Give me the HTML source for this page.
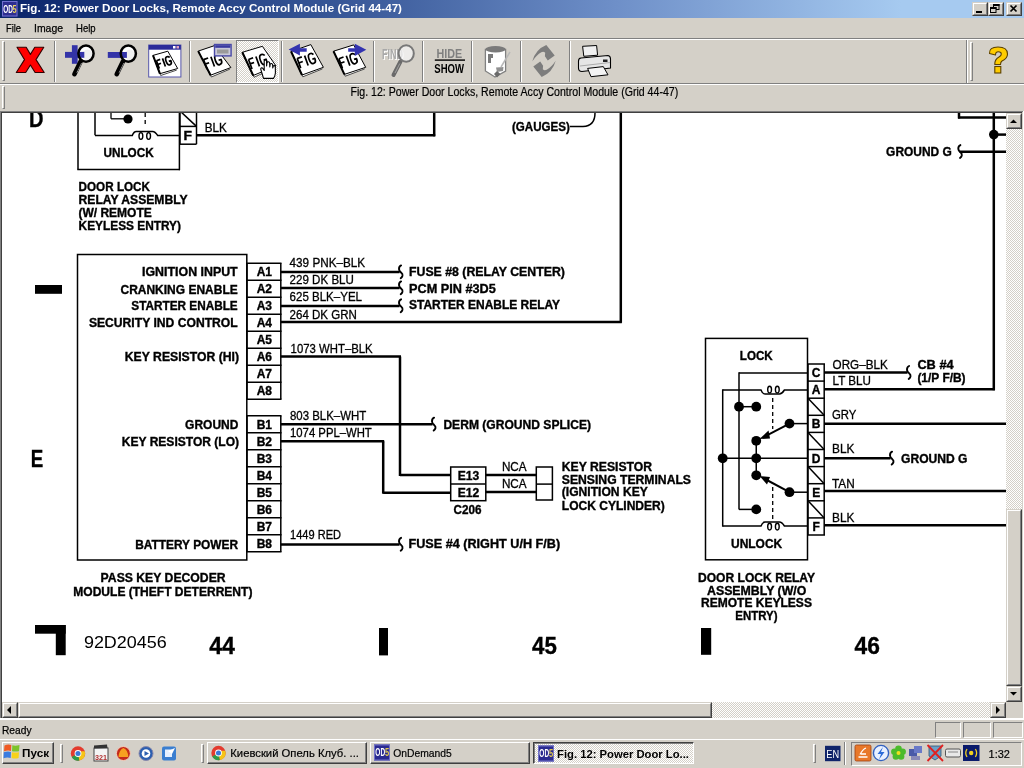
<!DOCTYPE html>
<html><head><meta charset="utf-8"><style>
html,body{margin:0;padding:0;width:1024px;height:768px;overflow:hidden;background:#d4d0c8;}
body{position:relative;font-family:"Liberation Sans", sans-serif;}
.a{position:absolute;box-sizing:border-box;}
svg text{font-family:"Liberation Sans", sans-serif;}
svg{will-change:transform;}
.dg text{stroke:#000;stroke-width:0.3px;}
.dg text[font-weight=bold]{stroke-width:0.35px;}
</style></head><body>
<div class="a" style="left:0px;top:0px;width:1024px;height:18px;background:linear-gradient(90deg,#0a246a 0%,#3a5a9a 35%,#6e8fc8 60%,#a6caf0 88%,#a6caf0 100%);"></div><svg class="a" style="left:0;top:0" width="1024" height="40"><rect x="2" y="1" width="15.5" height="15.5" fill="#2e2e90"/><rect x="2.5" y="1.5" width="14.5" height="14.5" fill="none" stroke="#7070d0" stroke-width="1"/><text x="3.2" y="12.6" font-size="11" font-weight="bold" fill="#fff" textLength="9.6" lengthAdjust="spacingAndGlyphs">OD</text><text x="12.6" y="12.6" font-size="11" font-weight="bold" fill="#e8d060" textLength="4" lengthAdjust="spacingAndGlyphs">5</text><text x="20.0" y="12.4" font-size="11.5" font-weight="bold" fill="#fff" textLength="382.0" lengthAdjust="spacingAndGlyphs">Fig. 12: Power Door Locks, Remote Accy Control Module (Grid 44-47)</text><text x="6.0" y="31.6" font-size="11.5" font-weight="normal" fill="#000" textLength="15.0" lengthAdjust="spacingAndGlyphs" stroke="#000" stroke-width="0.25">File</text><text x="34.0" y="31.6" font-size="11.5" font-weight="normal" fill="#000" textLength="29.0" lengthAdjust="spacingAndGlyphs" stroke="#000" stroke-width="0.25">Image</text><text x="76.0" y="31.6" font-size="11.5" font-weight="normal" fill="#000" textLength="19.6" lengthAdjust="spacingAndGlyphs" stroke="#000" stroke-width="0.25">Help</text></svg><div class="a" style="left:972px;top:2px;width:16px;height:14px;background:#d4d0c8;border-top:1px solid #d4d0c8;border-left:1px solid #d4d0c8;border-right:1px solid #404040;border-bottom:1px solid #404040;"></div><div class="a" style="left:973px;top:3px;width:14px;height:12px;border-top:1px solid #fff;border-left:1px solid #fff;border-right:1px solid #808080;border-bottom:1px solid #808080;"></div><div class="a" style="left:988px;top:2px;width:16px;height:14px;background:#d4d0c8;border-top:1px solid #d4d0c8;border-left:1px solid #d4d0c8;border-right:1px solid #404040;border-bottom:1px solid #404040;"></div><div class="a" style="left:989px;top:3px;width:14px;height:12px;border-top:1px solid #fff;border-left:1px solid #fff;border-right:1px solid #808080;border-bottom:1px solid #808080;"></div><div class="a" style="left:1006px;top:2px;width:16px;height:14px;background:#d4d0c8;border-top:1px solid #d4d0c8;border-left:1px solid #d4d0c8;border-right:1px solid #404040;border-bottom:1px solid #404040;"></div><div class="a" style="left:1007px;top:3px;width:14px;height:12px;border-top:1px solid #fff;border-left:1px solid #fff;border-right:1px solid #808080;border-bottom:1px solid #808080;"></div><svg class="a" style="left:0;top:0" width="1024" height="20"><rect x="976" y="11" width="6" height="2" fill="#000"/><rect x="993.5" y="4.5" width="5.5" height="5" fill="none" stroke="#000" stroke-width="1"/><rect x="993" y="4" width="6.5" height="2" fill="#000"/><rect x="990.5" y="7.5" width="5.5" height="5" fill="#d4d0c8" stroke="#000" stroke-width="1"/><rect x="990" y="7" width="6.5" height="2" fill="#000"/><path d="M1010.5,5.5 L1016.5,11.5 M1016.5,5.5 L1010.5,11.5" stroke="#000" stroke-width="1.7"/></svg><div class="a" style="left:0px;top:38px;width:1024px;height:1px;background:#808080;"></div><div class="a" style="left:0px;top:39px;width:1024px;height:1px;background:#fff;"></div><div class="a" style="left:0px;top:83px;width:1024px;height:1px;background:#808080;"></div><div class="a" style="left:0px;top:84px;width:1024px;height:1px;background:#fff;"></div><div class="a" style="left:2px;top:41px;width:3px;height:40px;border-top:1px solid #fff;border-left:1px solid #fff;border-right:1px solid #808080;border-bottom:1px solid #808080;"></div><div class="a" style="left:966px;top:40px;width:1px;height:43px;background:#808080;"></div><div class="a" style="left:967px;top:40px;width:1px;height:43px;background:#fff;"></div><div class="a" style="left:970px;top:42px;width:3px;height:39px;border-top:1px solid #fff;border-left:1px solid #fff;border-right:1px solid #808080;border-bottom:1px solid #808080;"></div><div class="a" style="left:54px;top:41px;width:2px;height:41px;border-left:1px solid #808080;border-right:1px solid #fff;"></div><div class="a" style="left:189px;top:41px;width:2px;height:41px;border-left:1px solid #808080;border-right:1px solid #fff;"></div><div class="a" style="left:281px;top:41px;width:2px;height:41px;border-left:1px solid #808080;border-right:1px solid #fff;"></div><div class="a" style="left:373px;top:41px;width:2px;height:41px;border-left:1px solid #808080;border-right:1px solid #fff;"></div><div class="a" style="left:422px;top:41px;width:2px;height:41px;border-left:1px solid #808080;border-right:1px solid #fff;"></div><div class="a" style="left:471px;top:41px;width:2px;height:41px;border-left:1px solid #808080;border-right:1px solid #fff;"></div><div class="a" style="left:520px;top:41px;width:2px;height:41px;border-left:1px solid #808080;border-right:1px solid #fff;"></div><div class="a" style="left:569px;top:41px;width:2px;height:41px;border-left:1px solid #808080;border-right:1px solid #fff;"></div><div class="a" style="left:236px;top:40px;width:43px;height:43px;border-top:1px solid #808080;border-left:1px solid #808080;border-right:1px solid #fff;border-bottom:1px solid #fff;background:repeating-conic-gradient(#d4d0c8 0% 25%, #fff 0% 50%) 0 0/2px 2px;"></div><div class="a" style="left:2px;top:86px;width:3px;height:23px;border-top:1px solid #fff;border-left:1px solid #fff;border-right:1px solid #808080;border-bottom:1px solid #808080;"></div><div class="a" style="left:0px;top:110px;width:1024px;height:1px;background:#d4d0c8;"></div><svg class="a" style="left:0;top:84" width="1024" height="30"><text x="350.5" y="12.0" font-size="12" font-weight="normal" fill="#000" textLength="327.7" lengthAdjust="spacingAndGlyphs" stroke="#000" stroke-width="0.2">Fig. 12: Power Door Locks, Remote Accy Control Module (Grid 44-47)</text></svg><div class="a" style="left:0px;top:111px;width:1024px;height:1px;background:#808080;"></div><div class="a" style="left:1px;top:112px;width:1022px;height:1px;background:#404040;"></div><div class="a" style="left:0px;top:111px;width:1px;height:608px;background:#808080;"></div><div class="a" style="left:1px;top:112px;width:1px;height:606px;background:#404040;"></div><div class="a" style="left:2px;top:113px;width:1004px;height:589px;background:#fff;"></div><div class="a" style="left:1022px;top:112px;width:1px;height:606px;background:#d4d0c8;"></div><div class="a" style="left:1023px;top:111px;width:1px;height:608px;background:#fff;"></div><div class="a" style="left:1px;top:718px;width:1022px;height:1px;background:#d4d0c8;"></div><div class="a" style="left:0px;top:718px;width:1024px;height:1px;background:#fff;"></div><div class="a" style="left:1006px;top:113px;width:16px;height:589px;background:repeating-conic-gradient(#d4d0c8 0% 25%, #fff 0% 50%) 0 0/2px 2px;"></div><div class="a" style="left:1006px;top:113px;width:16px;height:16px;background:#d4d0c8;border-top:1px solid #d4d0c8;border-left:1px solid #d4d0c8;border-right:1px solid #404040;border-bottom:1px solid #404040;"></div><div class="a" style="left:1007px;top:114px;width:14px;height:14px;border-top:1px solid #fff;border-left:1px solid #fff;border-right:1px solid #808080;border-bottom:1px solid #808080;"></div><div class="a" style="left:1006px;top:509px;width:16px;height:177px;background:#d4d0c8;border-top:1px solid #d4d0c8;border-left:1px solid #d4d0c8;border-right:1px solid #404040;border-bottom:1px solid #404040;"></div><div class="a" style="left:1007px;top:510px;width:14px;height:175px;border-top:1px solid #fff;border-left:1px solid #fff;border-right:1px solid #808080;border-bottom:1px solid #808080;"></div><div class="a" style="left:1006px;top:686px;width:16px;height:16px;background:#d4d0c8;border-top:1px solid #d4d0c8;border-left:1px solid #d4d0c8;border-right:1px solid #404040;border-bottom:1px solid #404040;"></div><div class="a" style="left:1007px;top:687px;width:14px;height:14px;border-top:1px solid #fff;border-left:1px solid #fff;border-right:1px solid #808080;border-bottom:1px solid #808080;"></div><div class="a" style="left:2px;top:702px;width:1004px;height:16px;background:repeating-conic-gradient(#d4d0c8 0% 25%, #fff 0% 50%) 0 0/2px 2px;"></div><div class="a" style="left:2px;top:702px;width:16px;height:16px;background:#d4d0c8;border-top:1px solid #d4d0c8;border-left:1px solid #d4d0c8;border-right:1px solid #404040;border-bottom:1px solid #404040;"></div><div class="a" style="left:3px;top:703px;width:14px;height:14px;border-top:1px solid #fff;border-left:1px solid #fff;border-right:1px solid #808080;border-bottom:1px solid #808080;"></div><div class="a" style="left:18px;top:702px;width:694px;height:16px;background:#d4d0c8;border-top:1px solid #d4d0c8;border-left:1px solid #d4d0c8;border-right:1px solid #404040;border-bottom:1px solid #404040;"></div><div class="a" style="left:19px;top:703px;width:692px;height:14px;border-top:1px solid #fff;border-left:1px solid #fff;border-right:1px solid #808080;border-bottom:1px solid #808080;"></div><div class="a" style="left:990px;top:702px;width:16px;height:16px;background:#d4d0c8;border-top:1px solid #d4d0c8;border-left:1px solid #d4d0c8;border-right:1px solid #404040;border-bottom:1px solid #404040;"></div><div class="a" style="left:991px;top:703px;width:14px;height:14px;border-top:1px solid #fff;border-left:1px solid #fff;border-right:1px solid #808080;border-bottom:1px solid #808080;"></div><div class="a" style="left:1006px;top:702px;width:16px;height:16px;background:#d4d0c8;"></div><svg class="a" style="left:0;top:0" width="1024" height="768"><path d="M1010,123 L1017,123 L1013.5,119.5 Z" fill="#000"/><path d="M1010,692 L1017,692 L1013.5,695.5 Z" fill="#000"/><path d="M11,706 L11,714 L7,710 Z" fill="#000"/><path d="M996,706 L996,714 L1000,710 Z" fill="#000"/></svg><div class="a" style="left:0px;top:719px;width:1024px;height:20px;background:#d4d0c8;"></div><div class="a" style="left:0px;top:719px;width:1024px;height:1px;background:#fff;"></div><div class="a" style="left:935px;top:722px;width:26px;height:16px;border-top:1px solid #808080;border-left:1px solid #808080;border-right:1px solid #fff;border-bottom:1px solid #fff;"></div><div class="a" style="left:963px;top:722px;width:28px;height:16px;border-top:1px solid #808080;border-left:1px solid #808080;border-right:1px solid #fff;border-bottom:1px solid #fff;"></div><div class="a" style="left:993px;top:722px;width:30px;height:16px;border-top:1px solid #808080;border-left:1px solid #808080;border-right:1px solid #fff;border-bottom:1px solid #fff;"></div><svg class="a" style="left:0;top:719" width="200" height="20"><text x="2.0" y="14.8" font-size="11.5" font-weight="normal" fill="#000" textLength="29.5" lengthAdjust="spacingAndGlyphs" stroke="#000" stroke-width="0.25">Ready</text></svg><div class="a" style="left:0px;top:739px;width:1024px;height:29px;background:#d4d0c8;"></div><div class="a" style="left:0px;top:739px;width:1024px;height:1px;background:#fff;"></div><div class="a" style="left:2px;top:742px;width:52px;height:22px;background:#d4d0c8;border-top:1px solid #fff;border-left:1px solid #fff;border-right:1px solid #404040;border-bottom:1px solid #404040;"></div><div class="a" style="left:3px;top:743px;width:50px;height:20px;border-right:1px solid #808080;border-bottom:1px solid #808080;"></div><div class="a" style="left:60px;top:744px;width:3px;height:19px;border-top:1px solid #fff;border-left:1px solid #fff;border-right:1px solid #808080;border-bottom:1px solid #808080;"></div><div class="a" style="left:201px;top:744px;width:3px;height:19px;border-top:1px solid #fff;border-left:1px solid #fff;border-right:1px solid #808080;border-bottom:1px solid #808080;"></div><div class="a" style="left:207px;top:742px;width:160px;height:22px;background:#d4d0c8;border-top:1px solid #fff;border-left:1px solid #fff;border-right:1px solid #404040;border-bottom:1px solid #404040;"></div><div class="a" style="left:208px;top:743px;width:158px;height:20px;border-right:1px solid #808080;border-bottom:1px solid #808080;"></div><div class="a" style="left:370px;top:742px;width:160px;height:22px;background:#d4d0c8;border-top:1px solid #fff;border-left:1px solid #fff;border-right:1px solid #404040;border-bottom:1px solid #404040;"></div><div class="a" style="left:371px;top:743px;width:158px;height:20px;border-right:1px solid #808080;border-bottom:1px solid #808080;"></div><div class="a" style="left:533px;top:742px;width:161px;height:22px;border-top:1px solid #404040;border-left:1px solid #404040;border-right:1px solid #fff;border-bottom:1px solid #fff;background:repeating-conic-gradient(#d4d0c8 0% 25%, #fff 0% 50%) 0 0/2px 2px;"></div><div class="a" style="left:534px;top:743px;width:159px;height:20px;border-top:1px solid #808080;border-left:1px solid #808080;"></div><div class="a" style="left:813px;top:744px;width:3px;height:19px;border-top:1px solid #fff;border-left:1px solid #fff;border-right:1px solid #808080;border-bottom:1px solid #808080;"></div><div class="a" style="left:844px;top:742px;width:2px;height:23px;border-left:1px solid #808080;border-right:1px solid #fff;"></div><div class="a" style="left:851px;top:742px;width:171px;height:24px;border-top:1px solid #808080;border-left:1px solid #808080;border-right:1px solid #fff;border-bottom:1px solid #fff;"></div><svg class="a" style="left:0;top:0" width="1024" height="768" overflow="hidden"><defs><clipPath id="cl"><rect x="2" y="113" width="1004" height="589"/></clipPath></defs><g clip-path="url(#cl)" class="dg"><text x="29.0" y="127.0" font-size="23" font-weight="bold" fill="#000" textLength="14.5" lengthAdjust="spacingAndGlyphs">D</text><text x="30.8" y="467.0" font-size="23" font-weight="bold" fill="#000" textLength="12.5" lengthAdjust="spacingAndGlyphs">E</text><rect x="35" y="285" width="27" height="8.8" fill="#000"/><line x1="78" y1="100" x2="78" y2="169.5" stroke="#000" stroke-width="1.5"/><line x1="77.3" y1="169.5" x2="180" y2="169.5" stroke="#000" stroke-width="1.5"/><line x1="179.4" y1="100" x2="179.4" y2="170.2" stroke="#000" stroke-width="1.5"/><line x1="95" y1="100" x2="95" y2="135.3" stroke="#000" stroke-width="1.5"/><path d="M95,135.4 L132.3,135.4 Q133.8,131.4 136.3,131.4 L152.6,131.4 Q155.1,131.4 157.6,135.4 L180,135.4" fill="none" stroke="#000" stroke-width="1.5"/><ellipse cx="140.9" cy="136.0" rx="1.9" ry="3.4" fill="none" stroke="#000" stroke-width="1.4"/><ellipse cx="148.60000000000002" cy="136.0" rx="1.9" ry="3.4" fill="none" stroke="#000" stroke-width="1.4"/><line x1="111" y1="100" x2="111" y2="118.8" stroke="#000" stroke-width="1.3"/><line x1="111" y1="118.8" x2="126" y2="118.8" stroke="#000" stroke-width="1.3"/><circle cx="128" cy="119" r="4.6" fill="#000"/><line x1="145.2" y1="113" x2="145.2" y2="127" stroke="#000" stroke-width="1.3" stroke-dasharray="4,3"/><line x1="180" y1="100" x2="180" y2="144.2" stroke="#000" stroke-width="1.5"/><line x1="196.5" y1="100" x2="196.5" y2="144.2" stroke="#000" stroke-width="1.5"/><line x1="180" y1="126.4" x2="196.5" y2="126.4" stroke="#000" stroke-width="1.5"/><line x1="180" y1="144.2" x2="196.5" y2="144.2" stroke="#000" stroke-width="1.5"/><line x1="180" y1="111" x2="196.5" y2="126.4" stroke="#000" stroke-width="1.5"/><text x="183.5" y="140.0" font-size="12" font-weight="bold" fill="#000" textLength="8.5" lengthAdjust="spacingAndGlyphs">F</text><line x1="196.5" y1="135.3" x2="435.2" y2="135.3" stroke="#000" stroke-width="2.5"/><line x1="434.2" y1="100" x2="434.2" y2="136.3" stroke="#000" stroke-width="2.5"/><text x="204.7" y="131.6" font-size="12" font-weight="normal" fill="#000" textLength="22.1" lengthAdjust="spacingAndGlyphs">BLK</text><text x="103.5" y="156.5" font-size="12" font-weight="bold" fill="#000" textLength="50.2" lengthAdjust="spacingAndGlyphs">UNLOCK</text><text x="78.6" y="191.0" font-size="12" font-weight="bold" fill="#000" textLength="71.4" lengthAdjust="spacingAndGlyphs">DOOR LOCK</text><text x="78.6" y="203.7" font-size="12" font-weight="bold" fill="#000" textLength="109.0" lengthAdjust="spacingAndGlyphs">RELAY ASSEMBLY</text><text x="78.4" y="217.0" font-size="12" font-weight="bold" fill="#000" textLength="73.4" lengthAdjust="spacingAndGlyphs">(W/ REMOTE</text><text x="78.6" y="229.5" font-size="12" font-weight="bold" fill="#000" textLength="102.4" lengthAdjust="spacingAndGlyphs">KEYLESS ENTRY)</text><text x="512.0" y="130.8" font-size="12" font-weight="bold" fill="#000" textLength="57.8" lengthAdjust="spacingAndGlyphs">(GAUGES)</text><path d="M570,126.6 L583,126.6 Q595,126 595,113" fill="none" stroke="#000" stroke-width="1.5"/><line x1="620.8" y1="100" x2="620.8" y2="322.7" stroke="#000" stroke-width="2.5"/><line x1="959" y1="100" x2="959" y2="118.5" stroke="#000" stroke-width="2.5"/><line x1="958" y1="117.5" x2="1010" y2="117.5" stroke="#000" stroke-width="2.5"/><line x1="993.8" y1="100" x2="993.8" y2="390.3" stroke="#000" stroke-width="2.5"/><circle cx="993.8" cy="134.6" r="4.8" fill="#000"/><line x1="993.8" y1="134.6" x2="1010" y2="134.6" stroke="#000" stroke-width="2.5"/><path d="M960.4,145.1 Q958.1999999999999,146.1 958.3,148.89999999999998 Q958.5,151.1 960.4,152.29999999999998 Q962.1999999999999,153.7 961.8,155.5 Q961.4,157.0 960.0,158.0" fill="none" stroke="#000" stroke-width="1.9" stroke-linecap="round"/><line x1="959.5" y1="151.7" x2="1010" y2="151.7" stroke="#000" stroke-width="2.5"/><text x="886.1" y="155.8" font-size="12" font-weight="bold" fill="#000" textLength="65.7" lengthAdjust="spacingAndGlyphs">GROUND G</text><rect x="77.5" y="254.5" width="169.30" height="305.50" fill="none" stroke="#000" stroke-width="1.5"/><line x1="247" y1="263.2" x2="247" y2="399.2" stroke="#000" stroke-width="1.5"/><line x1="280.8" y1="263.2" x2="280.8" y2="399.2" stroke="#000" stroke-width="1.5"/><line x1="246.5" y1="263.2" x2="281.5" y2="263.2" stroke="#000" stroke-width="1.5"/><line x1="246.5" y1="280.2" x2="281.5" y2="280.2" stroke="#000" stroke-width="1.5"/><line x1="246.5" y1="297.2" x2="281.5" y2="297.2" stroke="#000" stroke-width="1.5"/><line x1="246.5" y1="314.2" x2="281.5" y2="314.2" stroke="#000" stroke-width="1.5"/><line x1="246.5" y1="331.2" x2="281.5" y2="331.2" stroke="#000" stroke-width="1.5"/><line x1="246.5" y1="348.2" x2="281.5" y2="348.2" stroke="#000" stroke-width="1.5"/><line x1="246.5" y1="365.2" x2="281.5" y2="365.2" stroke="#000" stroke-width="1.5"/><line x1="246.5" y1="382.2" x2="281.5" y2="382.2" stroke="#000" stroke-width="1.5"/><line x1="246.5" y1="399.2" x2="281.5" y2="399.2" stroke="#000" stroke-width="1.5"/><line x1="247" y1="415.8" x2="247" y2="551.8" stroke="#000" stroke-width="1.5"/><line x1="280.8" y1="415.8" x2="280.8" y2="551.8" stroke="#000" stroke-width="1.5"/><line x1="246.5" y1="415.8" x2="281.5" y2="415.8" stroke="#000" stroke-width="1.5"/><line x1="246.5" y1="432.8" x2="281.5" y2="432.8" stroke="#000" stroke-width="1.5"/><line x1="246.5" y1="449.8" x2="281.5" y2="449.8" stroke="#000" stroke-width="1.5"/><line x1="246.5" y1="466.8" x2="281.5" y2="466.8" stroke="#000" stroke-width="1.5"/><line x1="246.5" y1="483.8" x2="281.5" y2="483.8" stroke="#000" stroke-width="1.5"/><line x1="246.5" y1="500.8" x2="281.5" y2="500.8" stroke="#000" stroke-width="1.5"/><line x1="246.5" y1="517.8" x2="281.5" y2="517.8" stroke="#000" stroke-width="1.5"/><line x1="246.5" y1="534.8" x2="281.5" y2="534.8" stroke="#000" stroke-width="1.5"/><line x1="246.5" y1="551.8" x2="281.5" y2="551.8" stroke="#000" stroke-width="1.5"/><text x="264.3" y="276.0" font-size="12" font-weight="bold" text-anchor="middle">A1</text><text x="264.3" y="428.6" font-size="12" font-weight="bold" text-anchor="middle">B1</text><text x="264.3" y="293.0" font-size="12" font-weight="bold" text-anchor="middle">A2</text><text x="264.3" y="445.6" font-size="12" font-weight="bold" text-anchor="middle">B2</text><text x="264.3" y="310.0" font-size="12" font-weight="bold" text-anchor="middle">A3</text><text x="264.3" y="462.6" font-size="12" font-weight="bold" text-anchor="middle">B3</text><text x="264.3" y="327.0" font-size="12" font-weight="bold" text-anchor="middle">A4</text><text x="264.3" y="479.6" font-size="12" font-weight="bold" text-anchor="middle">B4</text><text x="264.3" y="344.0" font-size="12" font-weight="bold" text-anchor="middle">A5</text><text x="264.3" y="496.6" font-size="12" font-weight="bold" text-anchor="middle">B5</text><text x="264.3" y="361.0" font-size="12" font-weight="bold" text-anchor="middle">A6</text><text x="264.3" y="513.6" font-size="12" font-weight="bold" text-anchor="middle">B6</text><text x="264.3" y="378.0" font-size="12" font-weight="bold" text-anchor="middle">A7</text><text x="264.3" y="530.6" font-size="12" font-weight="bold" text-anchor="middle">B7</text><text x="264.3" y="395.0" font-size="12" font-weight="bold" text-anchor="middle">A8</text><text x="264.3" y="547.6" font-size="12" font-weight="bold" text-anchor="middle">B8</text><text x="142.0" y="276.4" font-size="12" font-weight="bold" fill="#000" textLength="95.7" lengthAdjust="spacingAndGlyphs">IGNITION INPUT</text><text x="120.5" y="293.6" font-size="12" font-weight="bold" fill="#000" textLength="117.2" lengthAdjust="spacingAndGlyphs">CRANKING ENABLE</text><text x="131.3" y="310.4" font-size="12" font-weight="bold" fill="#000" textLength="106.4" lengthAdjust="spacingAndGlyphs">STARTER ENABLE</text><text x="88.9" y="327.1" font-size="12" font-weight="bold" fill="#000" textLength="148.8" lengthAdjust="spacingAndGlyphs">SECURITY IND CONTROL</text><text x="124.8" y="361.3" font-size="12" font-weight="bold" fill="#000" textLength="114.2" lengthAdjust="spacingAndGlyphs">KEY RESISTOR (HI)</text><text x="185.1" y="428.8" font-size="12" font-weight="bold" fill="#000" textLength="53.3" lengthAdjust="spacingAndGlyphs">GROUND</text><text x="121.8" y="446.0" font-size="12" font-weight="bold" fill="#000" textLength="117.2" lengthAdjust="spacingAndGlyphs">KEY RESISTOR (LO)</text><text x="135.2" y="548.9" font-size="12" font-weight="bold" fill="#000" textLength="102.9" lengthAdjust="spacingAndGlyphs">BATTERY POWER</text><text x="100.6" y="582.1" font-size="12" font-weight="bold" fill="#000" textLength="125.0" lengthAdjust="spacingAndGlyphs">PASS KEY DECODER</text><text x="73.3" y="595.8" font-size="12" font-weight="bold" fill="#000" textLength="179.1" lengthAdjust="spacingAndGlyphs">MODULE (THEFT DETERRENT)</text><line x1="280.8" y1="272" x2="399.5" y2="272" stroke="#000" stroke-width="2.5"/><path d="M401.1,265.4 Q398.9,266.4 399.0,269.2 Q399.2,271.4 401.1,272.6 Q402.9,274 402.5,275.8 Q402.1,277.3 400.7,278.3" fill="none" stroke="#000" stroke-width="1.9" stroke-linecap="round"/><line x1="280.8" y1="288" x2="399.5" y2="288" stroke="#000" stroke-width="2.5"/><path d="M401.1,281.4 Q398.9,282.4 399.0,285.2 Q399.2,287.4 401.1,288.6 Q402.9,290 402.5,291.8 Q402.1,293.3 400.7,294.3" fill="none" stroke="#000" stroke-width="1.9" stroke-linecap="round"/><line x1="280.8" y1="305.9" x2="399.5" y2="305.9" stroke="#000" stroke-width="2.5"/><path d="M401.1,299.29999999999995 Q398.9,300.29999999999995 399.0,303.09999999999997 Q399.2,305.29999999999995 401.1,306.5 Q402.9,307.9 402.5,309.7 Q402.1,311.2 400.7,312.2" fill="none" stroke="#000" stroke-width="1.9" stroke-linecap="round"/><line x1="280.8" y1="544.4" x2="399.5" y2="544.4" stroke="#000" stroke-width="2.5"/><path d="M401.1,537.8 Q398.9,538.8 399.0,541.6 Q399.2,543.8 401.1,545.0 Q402.9,546.4 402.5,548.1999999999999 Q402.1,549.6999999999999 400.7,550.6999999999999" fill="none" stroke="#000" stroke-width="1.9" stroke-linecap="round"/><line x1="280.8" y1="322" x2="621.8" y2="322" stroke="#000" stroke-width="2.5"/><line x1="280.8" y1="356.6" x2="401" y2="356.6" stroke="#000" stroke-width="2.5"/><line x1="400" y1="356.6" x2="400" y2="476" stroke="#000" stroke-width="2.5"/><line x1="400" y1="475" x2="451" y2="475" stroke="#000" stroke-width="2.5"/><line x1="280.8" y1="424.3" x2="432.5" y2="424.3" stroke="#000" stroke-width="2.5"/><path d="M434.1,417.7 Q431.9,418.7 432.0,421.5 Q432.2,423.7 434.1,424.90000000000003 Q435.9,426.3 435.5,428.1 Q435.1,429.6 433.7,430.6" fill="none" stroke="#000" stroke-width="1.9" stroke-linecap="round"/><line x1="280.8" y1="441.3" x2="384.2" y2="441.3" stroke="#000" stroke-width="2.5"/><line x1="383.2" y1="441.3" x2="383.2" y2="493.7" stroke="#000" stroke-width="2.5"/><line x1="383.2" y1="492.7" x2="451" y2="492.7" stroke="#000" stroke-width="2.5"/><text x="289.6" y="267.2" font-size="12" font-weight="normal" fill="#000" textLength="75.5" lengthAdjust="spacingAndGlyphs">439 PNK–BLK</text><text x="289.6" y="284.3" font-size="12" font-weight="normal" fill="#000" textLength="64.3" lengthAdjust="spacingAndGlyphs">229 DK BLU</text><text x="289.6" y="301.3" font-size="12" font-weight="normal" fill="#000" textLength="72.4" lengthAdjust="spacingAndGlyphs">625 BLK–YEL</text><text x="289.6" y="318.5" font-size="12" font-weight="normal" fill="#000" textLength="67.3" lengthAdjust="spacingAndGlyphs">264 DK GRN</text><text x="290.6" y="352.6" font-size="12" font-weight="normal" fill="#000" textLength="82.1" lengthAdjust="spacingAndGlyphs">1073 WHT–BLK</text><text x="290.0" y="420.2" font-size="12" font-weight="normal" fill="#000" textLength="76.2" lengthAdjust="spacingAndGlyphs">803 BLK–WHT</text><text x="290.0" y="436.9" font-size="12" font-weight="normal" fill="#000" textLength="81.8" lengthAdjust="spacingAndGlyphs">1074 PPL–WHT</text><text x="290.0" y="539.4" font-size="12" font-weight="normal" fill="#000" textLength="51.0" lengthAdjust="spacingAndGlyphs">1449 RED</text><text x="409.0" y="275.7" font-size="12" font-weight="bold" fill="#000" textLength="155.9" lengthAdjust="spacingAndGlyphs">FUSE #8 (RELAY CENTER)</text><text x="409.0" y="292.8" font-size="12" font-weight="bold" fill="#000" textLength="86.8" lengthAdjust="spacingAndGlyphs">PCM PIN #3D5</text><text x="409.0" y="309.1" font-size="12" font-weight="bold" fill="#000" textLength="151.1" lengthAdjust="spacingAndGlyphs">STARTER ENABLE RELAY</text><text x="443.4" y="428.7" font-size="12" font-weight="bold" fill="#000" textLength="147.6" lengthAdjust="spacingAndGlyphs">DERM (GROUND SPLICE)</text><text x="408.5" y="547.8" font-size="12" font-weight="bold" fill="#000" textLength="151.6" lengthAdjust="spacingAndGlyphs">FUSE #4 (RIGHT U/H F/B)</text><rect x="450.7" y="467" width="35.10" height="33.70" fill="none" stroke="#000" stroke-width="1.5"/><line x1="450.7" y1="484.1" x2="485.8" y2="484.1" stroke="#000" stroke-width="1.5"/><text x="457.8" y="479.8" font-size="12" font-weight="bold" fill="#000" textLength="21.5" lengthAdjust="spacingAndGlyphs">E13</text><text x="457.8" y="497.0" font-size="12" font-weight="bold" fill="#000" textLength="21.5" lengthAdjust="spacingAndGlyphs">E12</text><text x="453.5" y="513.6" font-size="12" font-weight="bold" fill="#000" textLength="28.0" lengthAdjust="spacingAndGlyphs">C206</text><line x1="485.8" y1="474.9" x2="536.3" y2="474.9" stroke="#000" stroke-width="2.5"/><line x1="485.8" y1="492.1" x2="536.3" y2="492.1" stroke="#000" stroke-width="2.5"/><text x="501.9" y="471.2" font-size="12" font-weight="normal" fill="#000" textLength="24.7" lengthAdjust="spacingAndGlyphs">NCA</text><text x="501.9" y="487.8" font-size="12" font-weight="normal" fill="#000" textLength="24.7" lengthAdjust="spacingAndGlyphs">NCA</text><rect x="536.3" y="467" width="16.10" height="33.00" fill="none" stroke="#000" stroke-width="1.5"/><line x1="536.3" y1="484.1" x2="552.4" y2="484.1" stroke="#000" stroke-width="1.5"/><text x="561.8" y="471.3" font-size="12" font-weight="bold" fill="#000" textLength="90.2" lengthAdjust="spacingAndGlyphs">KEY RESISTOR</text><text x="561.8" y="483.8" font-size="12" font-weight="bold" fill="#000" textLength="129.2" lengthAdjust="spacingAndGlyphs">SENSING TERMINALS</text><text x="561.8" y="496.1" font-size="12" font-weight="bold" fill="#000" textLength="86.0" lengthAdjust="spacingAndGlyphs">(IGNITION KEY</text><text x="561.8" y="509.5" font-size="12" font-weight="bold" fill="#000" textLength="103.0" lengthAdjust="spacingAndGlyphs">LOCK CYLINDER)</text><rect x="705.5" y="338.4" width="102.00" height="221.40" fill="none" stroke="#000" stroke-width="1.5"/><text x="739.8" y="360.3" font-size="12" font-weight="bold" fill="#000" textLength="32.9" lengthAdjust="spacingAndGlyphs">LOCK</text><text x="731.0" y="547.8" font-size="12" font-weight="bold" fill="#000" textLength="51.2" lengthAdjust="spacingAndGlyphs">UNLOCK</text><line x1="808" y1="364" x2="808" y2="535" stroke="#000" stroke-width="1.5"/><line x1="824.2" y1="364" x2="824.2" y2="535" stroke="#000" stroke-width="1.5"/><line x1="807.3" y1="364.0" x2="825" y2="364.0" stroke="#000" stroke-width="1.5"/><line x1="807.3" y1="381.1" x2="825" y2="381.1" stroke="#000" stroke-width="1.5"/><line x1="807.3" y1="398.2" x2="825" y2="398.2" stroke="#000" stroke-width="1.5"/><line x1="807.3" y1="415.3" x2="825" y2="415.3" stroke="#000" stroke-width="1.5"/><line x1="807.3" y1="432.4" x2="825" y2="432.4" stroke="#000" stroke-width="1.5"/><line x1="807.3" y1="449.5" x2="825" y2="449.5" stroke="#000" stroke-width="1.5"/><line x1="807.3" y1="466.6" x2="825" y2="466.6" stroke="#000" stroke-width="1.5"/><line x1="807.3" y1="483.70000000000005" x2="825" y2="483.70000000000005" stroke="#000" stroke-width="1.5"/><line x1="807.3" y1="500.8" x2="825" y2="500.8" stroke="#000" stroke-width="1.5"/><line x1="807.3" y1="517.9" x2="825" y2="517.9" stroke="#000" stroke-width="1.5"/><line x1="807.3" y1="535.0" x2="825" y2="535.0" stroke="#000" stroke-width="1.5"/><line x1="808" y1="398.2" x2="824.2" y2="415.3" stroke="#000" stroke-width="1.5"/><line x1="808" y1="432.4" x2="824.2" y2="449.5" stroke="#000" stroke-width="1.5"/><line x1="808" y1="466.6" x2="824.2" y2="483.70000000000005" stroke="#000" stroke-width="1.5"/><line x1="808" y1="500.8" x2="824.2" y2="517.9" stroke="#000" stroke-width="1.5"/><text x="816.2" y="377.0" font-size="12" font-weight="bold" text-anchor="middle">C</text><text x="816.2" y="394.1" font-size="12" font-weight="bold" text-anchor="middle">A</text><text x="816.2" y="428.3" font-size="12" font-weight="bold" text-anchor="middle">B</text><text x="816.2" y="462.5" font-size="12" font-weight="bold" text-anchor="middle">D</text><text x="816.2" y="496.7" font-size="12" font-weight="bold" text-anchor="middle">E</text><text x="816.2" y="530.9" font-size="12" font-weight="bold" text-anchor="middle">F</text><line x1="808" y1="373" x2="739" y2="373" stroke="#000" stroke-width="1.5"/><line x1="739" y1="372.3" x2="739" y2="509.4" stroke="#000" stroke-width="1.5"/><line x1="739" y1="509.4" x2="756" y2="509.4" stroke="#000" stroke-width="1.5"/><circle cx="756.25" cy="509.4" r="4.9" fill="#000"/><path d="M722.7,390 L761,390 Q762.5,394.0 765,394.0 L779.4,394.0 Q781.9,394.0 784.4,390 L808,390" fill="none" stroke="#000" stroke-width="1.5"/><ellipse cx="769.6" cy="389.6" rx="1.9" ry="3.4" fill="none" stroke="#000" stroke-width="1.4"/><ellipse cx="777.3" cy="389.6" rx="1.9" ry="3.4" fill="none" stroke="#000" stroke-width="1.4"/><path d="M722.7,526 L761,526 Q762.5,522.0 765,522.0 L779.4,522.0 Q781.9,522.0 784.4,526 L808,526" fill="none" stroke="#000" stroke-width="1.5"/><ellipse cx="769.6" cy="526.6" rx="1.9" ry="3.4" fill="none" stroke="#000" stroke-width="1.4"/><ellipse cx="777.3" cy="526.6" rx="1.9" ry="3.4" fill="none" stroke="#000" stroke-width="1.4"/><line x1="722.7" y1="389.3" x2="722.7" y2="526.7" stroke="#000" stroke-width="1.5"/><circle cx="739" cy="406.7" r="4.9" fill="#000"/><circle cx="756.25" cy="406.7" r="4.9" fill="#000"/><line x1="739" y1="406.7" x2="756.25" y2="406.7" stroke="#000" stroke-width="1.5"/><line x1="772.7" y1="398" x2="772.7" y2="429" stroke="#000" stroke-width="1.3" stroke-dasharray="4,3"/><line x1="772.7" y1="487" x2="772.7" y2="519" stroke="#000" stroke-width="1.3" stroke-dasharray="4,3"/><circle cx="789.5" cy="423.6" r="4.9" fill="#000"/><line x1="789.5" y1="423.6" x2="808" y2="423.6" stroke="#000" stroke-width="1.5"/><line x1="789.5" y1="423.6" x2="764" y2="436.8" stroke="#000" stroke-width="2"/><path d="M759.5,439 L768.5,430.5 L770,438.5 Z" fill="#000"/><circle cx="756.25" cy="440.8" r="4.9" fill="#000"/><line x1="756.25" y1="440.8" x2="756.25" y2="475.3" stroke="#000" stroke-width="1.5"/><circle cx="722.7" cy="458.3" r="4.9" fill="#000"/><circle cx="756.25" cy="458.3" r="4.9" fill="#000"/><line x1="722.7" y1="458.3" x2="808" y2="458.3" stroke="#000" stroke-width="1.5"/><circle cx="756.25" cy="475.3" r="4.9" fill="#000"/><circle cx="789.5" cy="492.2" r="4.9" fill="#000"/><line x1="789.5" y1="492.2" x2="808" y2="492.2" stroke="#000" stroke-width="1.5"/><line x1="789.5" y1="492.2" x2="764" y2="478.5" stroke="#000" stroke-width="2"/><path d="M759.5,476 L770,477 L767,484.5 Z" fill="#000"/><line x1="824.2" y1="372.6" x2="907.5" y2="372.6" stroke="#000" stroke-width="2.5"/><path d="M909.1,366.0 Q906.9,367.0 907.0,369.8 Q907.2,372.0 909.1,373.20000000000005 Q910.9,374.6 910.5,376.40000000000003 Q910.1,377.90000000000003 908.7,378.90000000000003" fill="none" stroke="#000" stroke-width="1.9" stroke-linecap="round"/><line x1="824.2" y1="389.3" x2="994.9" y2="389.3" stroke="#000" stroke-width="2.5"/><line x1="824.2" y1="423.7" x2="1010" y2="423.7" stroke="#000" stroke-width="2.5"/><line x1="824.2" y1="458.3" x2="890.5" y2="458.3" stroke="#000" stroke-width="2.5"/><path d="M892.1,451.7 Q889.9,452.7 890.0,455.5 Q890.2,457.7 892.1,458.90000000000003 Q893.9,460.3 893.5,462.1 Q893.1,463.6 891.7,464.6" fill="none" stroke="#000" stroke-width="1.9" stroke-linecap="round"/><line x1="824.2" y1="491.1" x2="1010" y2="491.1" stroke="#000" stroke-width="2.5"/><line x1="824.2" y1="525.3" x2="1010" y2="525.3" stroke="#000" stroke-width="2.5"/><text x="832.6" y="368.6" font-size="12" font-weight="normal" fill="#000" textLength="55.1" lengthAdjust="spacingAndGlyphs">ORG–BLK</text><text x="832.6" y="385.2" font-size="12" font-weight="normal" fill="#000" textLength="38.4" lengthAdjust="spacingAndGlyphs">LT BLU</text><text x="832.0" y="419.2" font-size="12" font-weight="normal" fill="#000" textLength="24.4" lengthAdjust="spacingAndGlyphs">GRY</text><text x="832.0" y="453.1" font-size="12" font-weight="normal" fill="#000" textLength="22.4" lengthAdjust="spacingAndGlyphs">BLK</text><text x="832.0" y="487.8" font-size="12" font-weight="normal" fill="#000" textLength="22.7" lengthAdjust="spacingAndGlyphs">TAN</text><text x="832.0" y="521.9" font-size="12" font-weight="normal" fill="#000" textLength="22.4" lengthAdjust="spacingAndGlyphs">BLK</text><text x="917.4" y="368.6" font-size="12" font-weight="bold" fill="#000" textLength="36.2" lengthAdjust="spacingAndGlyphs">CB #4</text><text x="917.4" y="381.5" font-size="12" font-weight="bold" fill="#000" textLength="48.2" lengthAdjust="spacingAndGlyphs">(1/P F/B)</text><text x="901.0" y="462.8" font-size="12" font-weight="bold" fill="#000" textLength="66.5" lengthAdjust="spacingAndGlyphs">GROUND G</text><text x="698.0" y="581.7" font-size="12" font-weight="bold" fill="#000" textLength="117.0" lengthAdjust="spacingAndGlyphs">DOOR LOCK RELAY</text><text x="707.0" y="594.7" font-size="12" font-weight="bold" fill="#000" textLength="99.4" lengthAdjust="spacingAndGlyphs">ASSEMBLY (W/O</text><text x="701.0" y="607.2" font-size="12" font-weight="bold" fill="#000" textLength="110.9" lengthAdjust="spacingAndGlyphs">REMOTE KEYLESS</text><text x="735.3" y="620.0" font-size="12" font-weight="bold" fill="#000" textLength="42.2" lengthAdjust="spacingAndGlyphs">ENTRY)</text><rect x="35" y="625" width="30.7" height="8.7" fill="#000"/><rect x="55.8" y="625" width="9.9" height="30.2" fill="#000"/><text x="83.9" y="648.4" font-size="17.3" font-weight="normal" fill="#000" textLength="82.9" lengthAdjust="spacingAndGlyphs" style="stroke:none">92D20456</text><text x="209.2" y="654.1" font-size="23.4" font-weight="bold" fill="#000" textLength="25.7" lengthAdjust="spacingAndGlyphs">44</text><text x="532.0" y="654.4" font-size="23.4" font-weight="bold" fill="#000" textLength="24.8" lengthAdjust="spacingAndGlyphs">45</text><text x="854.6" y="654.0" font-size="23.4" font-weight="bold" fill="#000" textLength="25.4" lengthAdjust="spacingAndGlyphs">46</text><rect x="379" y="628" width="9" height="27.4" fill="#000"/><rect x="701" y="628" width="10.2" height="26.8" fill="#000"/></g></svg><svg class="a" style="left:0;top:0" width="1024" height="84"><path d="M17,47.2 L26.2,47.2 L30.4,54.4 L34.8,47.2 L43.8,47.2 L36,59.6 L44.2,72.5 L35.1,72.5 L30.4,65 L25.7,72.5 L16.3,72.5 L24.5,59.6 Z" fill="#ff0000" stroke="#300" stroke-width="1.1" stroke-linejoin="round"/><rect x="65" y="51.9" width="19.3" height="5.9" fill="#3333a8"/><rect x="71.9" y="45.2" width="5.7" height="18.6" fill="#3333a8"/><line x1="80.6" y1="61.6" x2="74.4" y2="74.2" stroke="#000" stroke-width="4.6" stroke-linecap="round"/><line x1="81.4" y1="63.400000000000006" x2="76.8" y2="72.8" stroke="#fff" stroke-width="0.9" stroke-dasharray="1.3,0.9"/><ellipse cx="86" cy="53.6" rx="7.6" ry="8.2" fill="#fff"/><ellipse cx="87.5" cy="55.1" rx="5" ry="5.5" fill="#e4e4e4" opacity="0.6"/><rect x="77" y="51.9" width="7.3" height="5.9" fill="#3333a8"/><ellipse cx="86" cy="53.6" rx="7.6" ry="8.2" fill="none" stroke="#000" stroke-width="2.5"/><rect x="107.8" y="52" width="19.1" height="5.9" fill="#3333a8"/><line x1="122.9" y1="61.6" x2="116.70000000000002" y2="74.2" stroke="#000" stroke-width="4.6" stroke-linecap="round"/><line x1="123.70000000000002" y1="63.400000000000006" x2="119.10000000000001" y2="72.8" stroke="#fff" stroke-width="0.9" stroke-dasharray="1.3,0.9"/><ellipse cx="128.3" cy="53.6" rx="7.6" ry="8.2" fill="#fff"/><ellipse cx="129.8" cy="55.1" rx="5" ry="5.5" fill="#e4e4e4" opacity="0.6"/><rect x="119.5" y="52" width="7.4" height="5.9" fill="#3333a8"/><ellipse cx="128.3" cy="53.6" rx="7.6" ry="8.2" fill="none" stroke="#000" stroke-width="2.5"/><rect x="148.7" y="45" width="32.2" height="32" fill="#fff" stroke="#5555aa" stroke-width="1"/><rect x="148.7" y="45" width="32.2" height="4.7" fill="#2c2c9a"/><rect x="173" y="46" width="2.5" height="2.5" fill="#fff"/><rect x="176.5" y="46" width="2.5" height="2.5" fill="#e0a0c0"/><path d="M153,55.4 L160.70000000000002,75.5 L176.7,70.12" fill="#fff" stroke="#222" stroke-width="0.8"/><path d="M153,55.4 L167.8,51.2 L177.7,68.5 L159.9,73.7 Z" fill="#fff" stroke="#000" stroke-width="1"/><line x1="153" y1="55.4" x2="159.9" y2="73.7" stroke="#000" stroke-width="2"/><path d="M0,0 L0,9 M0,0.2 L4.2,0.2 M0,4.3 L3.6,4.3 M6.8,0 L6.8,9 M14.2,1.8 Q13.6,0 11.6,0 Q9.3,0 9.3,4.5 Q9.3,9 11.6,9 Q14.2,9 14.2,6.2 L14.2,5.2 L12,5.2" fill="none" stroke="#000" stroke-width="1.78" stroke-linejoin="round" transform="translate(164.2,62.3) rotate(-20) scale(0.9545454545454546) translate(-7.1,-4.5)"/><path d="M198.2,51.1 L211.4,77.0 L229.9,69.12" fill="#fff" stroke="#222" stroke-width="0.8"/><path d="M198.2,51.1 L214.3,45.7 L230.9,67.5 L210.6,75.2 Z" fill="#fff" stroke="#000" stroke-width="1"/><line x1="198.2" y1="51.1" x2="210.6" y2="75.2" stroke="#000" stroke-width="2"/><path d="M0,0 L0,9 M0,0.2 L4.2,0.2 M0,4.3 L3.6,4.3 M6.8,0 L6.8,9 M14.2,1.8 Q13.6,0 11.6,0 Q9.3,0 9.3,4.5 Q9.3,9 11.6,9 Q14.2,9 14.2,6.2 L14.2,5.2 L12,5.2" fill="none" stroke="#000" stroke-width="1.46" stroke-linejoin="round" transform="translate(213,61.5) rotate(-20) scale(1.1636363636363638) translate(-7.1,-4.5)"/><rect x="214.5" y="44.5" width="16.6" height="11.4" fill="#c8c8d8" stroke="#4a4aa8" stroke-width="1.4"/><rect x="215.2" y="45.2" width="15.2" height="2.6" fill="#3a3aa0"/><rect x="217" y="49.5" width="11.5" height="4" fill="#9a9a9a"/><path d="M242.3,52.3 L254.0,77.3 L275,67.62" fill="#fff" stroke="#222" stroke-width="0.8"/><path d="M242.3,52.3 L262.4,46.3 L276,66 L253.2,75.5 Z" fill="#fff" stroke="#000" stroke-width="1"/><line x1="242.3" y1="52.3" x2="253.2" y2="75.5" stroke="#000" stroke-width="2"/><path d="M0,0 L0,9 M0,0.2 L4.2,0.2 M0,4.3 L3.6,4.3 M6.8,0 L6.8,9 M14.2,1.8 Q13.6,0 11.6,0 Q9.3,0 9.3,4.5 Q9.3,9 11.6,9 Q14.2,9 14.2,6.2 L14.2,5.2 L12,5.2" fill="none" stroke="#000" stroke-width="1.46" stroke-linejoin="round" transform="translate(258,61.3) rotate(-20) scale(1.1636363636363638) translate(-7.1,-4.5)"/><path d="M263.5,78.4 L261,70 Q260,67.5 262.5,68 L264.2,70.5 L264.2,61 Q265.2,59 266.6,61 L266.6,66 L267,62.5 Q268.5,61 269.6,62.5 L269.8,67 L270.2,64 Q271.7,62.8 272.6,64.5 L272.8,68 L273.2,66 Q274.6,65 275.3,66.6 L275.4,73 Q275,76.5 273.5,78.4 Z" fill="#fff" stroke="#000" stroke-width="1.1" stroke-linejoin="round"/><path d="M291.1,51.5 L302.8,76.8 L322.4,68.92" fill="#fff" stroke="#222" stroke-width="0.8"/><path d="M291.1,51.5 L310.8,44.6 L323.4,67.3 L302,75 Z" fill="#fff" stroke="#000" stroke-width="1"/><line x1="291.1" y1="51.5" x2="302" y2="75" stroke="#000" stroke-width="2"/><path d="M0,0 L0,9 M0,0.2 L4.2,0.2 M0,4.3 L3.6,4.3 M6.8,0 L6.8,9 M14.2,1.8 Q13.6,0 11.6,0 Q9.3,0 9.3,4.5 Q9.3,9 11.6,9 Q14.2,9 14.2,6.2 L14.2,5.2 L12,5.2" fill="none" stroke="#000" stroke-width="1.46" stroke-linejoin="round" transform="translate(306.7,60.4) rotate(-20) scale(1.1636363636363638) translate(-7.1,-4.5)"/><path d="M288.6,49.6 L299.9,43.8 L299.9,48.2 L306.7,48.2 L306.7,51.8 L299.9,51.8 L299.9,55.6 Z" fill="#3434b0"/><path d="M333.5,51.2 L345.2,76.2 L364.7,68.92" fill="#fff" stroke="#222" stroke-width="0.8"/><path d="M333.5,51.2 L353.7,44.9 L365.7,67.3 L344.4,74.4 Z" fill="#fff" stroke="#000" stroke-width="1"/><line x1="333.5" y1="51.2" x2="344.4" y2="74.4" stroke="#000" stroke-width="2"/><path d="M0,0 L0,9 M0,0.2 L4.2,0.2 M0,4.3 L3.6,4.3 M6.8,0 L6.8,9 M14.2,1.8 Q13.6,0 11.6,0 Q9.3,0 9.3,4.5 Q9.3,9 11.6,9 Q14.2,9 14.2,6.2 L14.2,5.2 L12,5.2" fill="none" stroke="#000" stroke-width="1.46" stroke-linejoin="round" transform="translate(348.4,60.6) rotate(-20) scale(1.1636363636363638) translate(-7.1,-4.5)"/><path d="M366.3,49.8 L354.8,43.8 L354.8,48.2 L348.2,48.2 L348.2,51.8 L354.8,51.8 L354.8,55.9 Z" fill="#3434b0"/><text x="383" y="59.8" font-size="14" font-weight="bold" fill="#fff" textLength="21" lengthAdjust="spacingAndGlyphs">FIND</text><text x="382" y="58.8" font-size="14" font-weight="bold" fill="#a8a8a8" textLength="21" lengthAdjust="spacingAndGlyphs">FIND</text><line x1="400.5" y1="61.5" x2="393.5" y2="75" stroke="#6a6a6a" stroke-width="4" stroke-linecap="round"/><line x1="399.8" y1="63.5" x2="395" y2="73" stroke="#a0a0a0" stroke-width="1"/><ellipse cx="406.2" cy="53.5" rx="7.6" ry="8.3" fill="#f6f6f6" fill-opacity="0.75" stroke="#787878" stroke-width="2"/><text x="436.5" y="57.9" font-size="12.5" font-weight="bold" fill="#808080" textLength="25.7" lengthAdjust="spacingAndGlyphs">HIDE</text><rect x="434.8" y="59.4" width="30.2" height="1.4" fill="#000"/><text x="434.3" y="72.6" font-size="13" font-weight="bold" fill="#000" textLength="29.7" lengthAdjust="spacingAndGlyphs">SHOW</text><path d="M485.4,49.3 L485.4,71 L495,77 L505.6,71 L505.6,49.3 Z" fill="#fff" stroke="#808080" stroke-width="1.3"/><ellipse cx="495.5" cy="49.3" rx="10.1" ry="3.2" fill="#7a7a7a"/><path d="M488,54 L493,54 L493,58 L491,58 L491,63 L488,63 Z" fill="#7a7a7a"/><path d="M496,67.5 L503.5,67 L503,71 L497,72 Z" fill="#909090"/><path d="M494,74 L497,71 L500.5,74 L497,77.5 Z" fill="#6a6a6a"/><line x1="510" y1="52" x2="501" y2="67" stroke="#b8b8b8" stroke-width="1.5"/><path d="M532.3,61.3 Q535.5,49.5 546.3,45.1 L554.7,55.4 L547.8,60.5 L544.9,56.2 L545.2,52.8 Q543.6,51 541.3,52.2 Q536.5,55 532.3,61.3 Z" fill="#7d7d7d"/><path d="M532.3,61.3 Q535.5,49.5 546.3,45.1 L554.7,55.4 L547.8,60.5 L544.9,56.2 L545.2,52.8 Q543.6,51 541.3,52.2 Q536.5,55 532.3,61.3 Z" fill="#7d7d7d" transform="rotate(180 544 61)"/><path d="M582.6,46.3 L596.6,45.5 L597.6,55.2 L583.8,56.3 Z" fill="#f0f0f0" stroke="#000" stroke-width="1"/><path d="M581,58 L608,55.5 Q610.5,56 610.5,59 L610.5,68 L582,71.5 Q578.5,71.5 578.5,68 L578.5,61 Q578.5,58.3 581,58 Z" fill="#e6e6e6" stroke="#000" stroke-width="1.1"/><path d="M580,66 L610,62.5" stroke="#9a9a9a" stroke-width="0.8"/><rect x="603" y="59.5" width="4.5" height="2.5" fill="#202020"/><path d="M587.6,68.4 L603.3,66.6 L608,74.8 L591,76.7 Z" fill="#f4f4f4" stroke="#000" stroke-width="1"/><path d="M989.5,53.5 Q989,47 998,47 Q1007.5,47 1007.5,54 Q1007.5,58.5 1002,61 Q1000.5,62 1000.5,64.5 L994.8,64.5 Q994.5,59.5 999,57 Q1001.3,55.8 1001.3,54 Q1001.3,51.8 998.3,51.8 Q995.5,51.8 995.5,55 Z" fill="#ffcc00" stroke="#5a4000" stroke-width="1.1" stroke-linejoin="round"/><rect x="994.8" y="66.5" width="6" height="6.5" fill="#ffcc00" stroke="#5a4000" stroke-width="1.1"/></svg><svg class="a" style="left:0;top:736" width="1024" height="32"><path d="M4.5,9.5 Q8,8 11.3,9 L11,15 Q7.8,14 4,15.299999999999955 Z" fill="#f05a22"/><path d="M12.3,9.299999999999955 Q15.5,10.200000000000045 19.5,9 L19,15.200000000000045 Q15.5,16 12,15.200000000000045 Z" fill="#7cc42a"/><path d="M3.8,16.299999999999955 Q7.5,15 11,16 L10.7,22 Q7.2,21 3.5,22.200000000000045 Z" fill="#3a7ce0"/><path d="M11.9,16.200000000000045 Q15.3,17 19,16.200000000000045 L18.6,22 Q15,23 11.6,22 Z" fill="#f8d21a"/><text x="22" y="20.700000000000045" font-size="11.5" font-weight="bold" textLength="27" lengthAdjust="spacingAndGlyphs">Пуск</text><circle cx="78" cy="17.5" r="7.2" fill="#e33b2e"/><path d="M78,17.5 L71.736,21.1 A7.2,7.2 0 0 0 79.44,24.556 Z" fill="#2e9b48"/><path d="M78,17.5 L79.44,24.556 A7.2,7.2 0 0 0 84.84,15.34 L81.6,15.34 Z" fill="#f5c518"/><circle cx="78" cy="17.5" r="3.384" fill="#fff"/><circle cx="78" cy="17.5" r="2.52" fill="#3b78d8"/><rect x="94" y="12" width="14" height="13" fill="#f4f4f4" stroke="#444" stroke-width="1"/><path d="M94,9.5 L107,8.5 L107.5,12 L94,12.5 Z" fill="#333"/><text x="95" y="23.5" font-size="8" font-weight="bold" fill="#b03030" textLength="12" lengthAdjust="spacingAndGlyphs">321</text><circle cx="123.4" cy="17.5" r="7" fill="#c42a1a" stroke="#f0d0c0" stroke-width="1"/><path d="M118.5,21 Q119,14 123.4,12 Q128,14 128.3,21 Z" fill="#f7a020"/><circle cx="146" cy="17.5" r="7" fill="#2c5fb0" stroke="#88a" stroke-width="1"/><circle cx="146" cy="17.5" r="4.3" fill="#fff"/><path d="M144.5,15 L149,17.5 L144.5,20 Z" fill="#2c5fb0"/><rect x="162" y="10.5" width="14" height="14" rx="2" fill="#3a7ed0"/><path d="M165,13.5 L172,13.5 L172,21 L165,21 Z" fill="#e6f0ff"/><path d="M168,15 L175,12 L172,18 Z" fill="#fff"/><circle cx="218.5" cy="17" r="7.2" fill="#e33b2e"/><path d="M218.5,17 L212.236,20.6 A7.2,7.2 0 0 0 219.94,24.056 Z" fill="#2e9b48"/><path d="M218.5,17 L219.94,24.056 A7.2,7.2 0 0 0 225.34,14.84 L222.1,14.84 Z" fill="#f5c518"/><circle cx="218.5" cy="17" r="3.384" fill="#fff"/><circle cx="218.5" cy="17" r="2.52" fill="#3b78d8"/><text x="230.3" y="21.200000000000045" font-size="11.5" textLength="128.7" lengthAdjust="spacingAndGlyphs" stroke="#000" stroke-width="0.2">Киевский Опель Клуб. ...</text><rect x="374" y="8.5" width="16" height="16" fill="#2a2a90"/><rect x="374.5" y="9.0" width="15" height="15" fill="none" stroke="#7070c8" stroke-width="1"/><text x="375.3" y="20.1" font-size="11" font-weight="bold" fill="#fff" textLength="9.8" lengthAdjust="spacingAndGlyphs">OD</text><text x="385.1" y="20.1" font-size="11" font-weight="bold" fill="#e0c850" textLength="4.2" lengthAdjust="spacingAndGlyphs">5</text><text x="393.2" y="21.200000000000045" font-size="11.5" textLength="58.6" lengthAdjust="spacingAndGlyphs" stroke="#000" stroke-width="0.2">OnDemand5</text><rect x="538" y="9.5" width="16" height="16" fill="#2a2a90"/><rect x="538.5" y="10.0" width="15" height="15" fill="none" stroke="#7070c8" stroke-width="1"/><text x="539.3" y="21.1" font-size="11" font-weight="bold" fill="#fff" textLength="9.8" lengthAdjust="spacingAndGlyphs">OD</text><text x="549.1" y="21.1" font-size="11" font-weight="bold" fill="#e0c850" textLength="4.2" lengthAdjust="spacingAndGlyphs">5</text><text x="557" y="21.5" font-size="11.5" font-weight="bold" textLength="132" lengthAdjust="spacingAndGlyphs">Fig. 12: Power Door Lo...</text><rect x="825" y="9.799999999999955" width="15.5" height="15.4" fill="#10246a"/><text x="826.3" y="21.5" font-size="10.5" fill="#fff" textLength="12.8" lengthAdjust="spacingAndGlyphs">EN</text><rect x="855" y="9" width="16" height="16" rx="1.5" fill="#e8782a" stroke="#a04010" stroke-width="0.8"/><path d="M858.5,21 L867.5,21 M860,18.5 Q863,13 866,12 M861,18 L866,18" stroke="#fff" stroke-width="1.3" fill="none"/><circle cx="881" cy="17" r="7.6" fill="#e8f0ff" stroke="#3060c0" stroke-width="1.4"/><path d="M883,11 L877.5,18 L881,18 L879,23.5 L884.5,16 L881,16 Z" fill="#2a6ad8"/><circle cx="898.5" cy="748.7" r="3.3" fill="#4cbb2c" transform="translate(0,-736)"/><circle cx="902.6" cy="751.7" r="3.3" fill="#4cbb2c" transform="translate(0,-736)"/><circle cx="901.1" cy="756.5" r="3.3" fill="#4cbb2c" transform="translate(0,-736)"/><circle cx="895.9" cy="756.5" r="3.3" fill="#4cbb2c" transform="translate(0,-736)"/><circle cx="894.4" cy="751.7" r="3.3" fill="#4cbb2c" transform="translate(0,-736)"/><circle cx="898.5" cy="17" r="2" fill="#f0e020"/><rect x="909" y="13" width="8" height="7" fill="#4a5aa8"/><rect x="914" y="10" width="8" height="7" fill="#6a7ac8"/><rect x="911" y="20" width="9" height="4" fill="#8a8ab8"/><path d="M929,10 L941,10 L941,20 L935,24 L929,20 Z" fill="#6aa0c8" stroke="#305070" stroke-width="0.8"/><path d="M927.5,9 L943,25 M943,9 L927.5,25" stroke="#e02020" stroke-width="1.8"/><rect x="945.5" y="13" width="15" height="8" rx="1.5" fill="#e8e8e8" stroke="#555" stroke-width="1"/><path d="M948,16 L958,16" stroke="#888" stroke-width="1"/><rect x="963" y="9" width="16.5" height="16" fill="#0a1a6a"/><circle cx="971.2" cy="17" r="2.2" fill="#f0d020"/><path d="M967,13 Q964.5,17 967,21 M975.4,13 Q977.9,17 975.4,21" stroke="#f0d020" stroke-width="1.3" fill="none"/><text x="988.6" y="21.899999999999977" font-size="11.5" textLength="21.4" lengthAdjust="spacingAndGlyphs" stroke="#000" stroke-width="0.2">1:32</text></svg>
</body></html>
